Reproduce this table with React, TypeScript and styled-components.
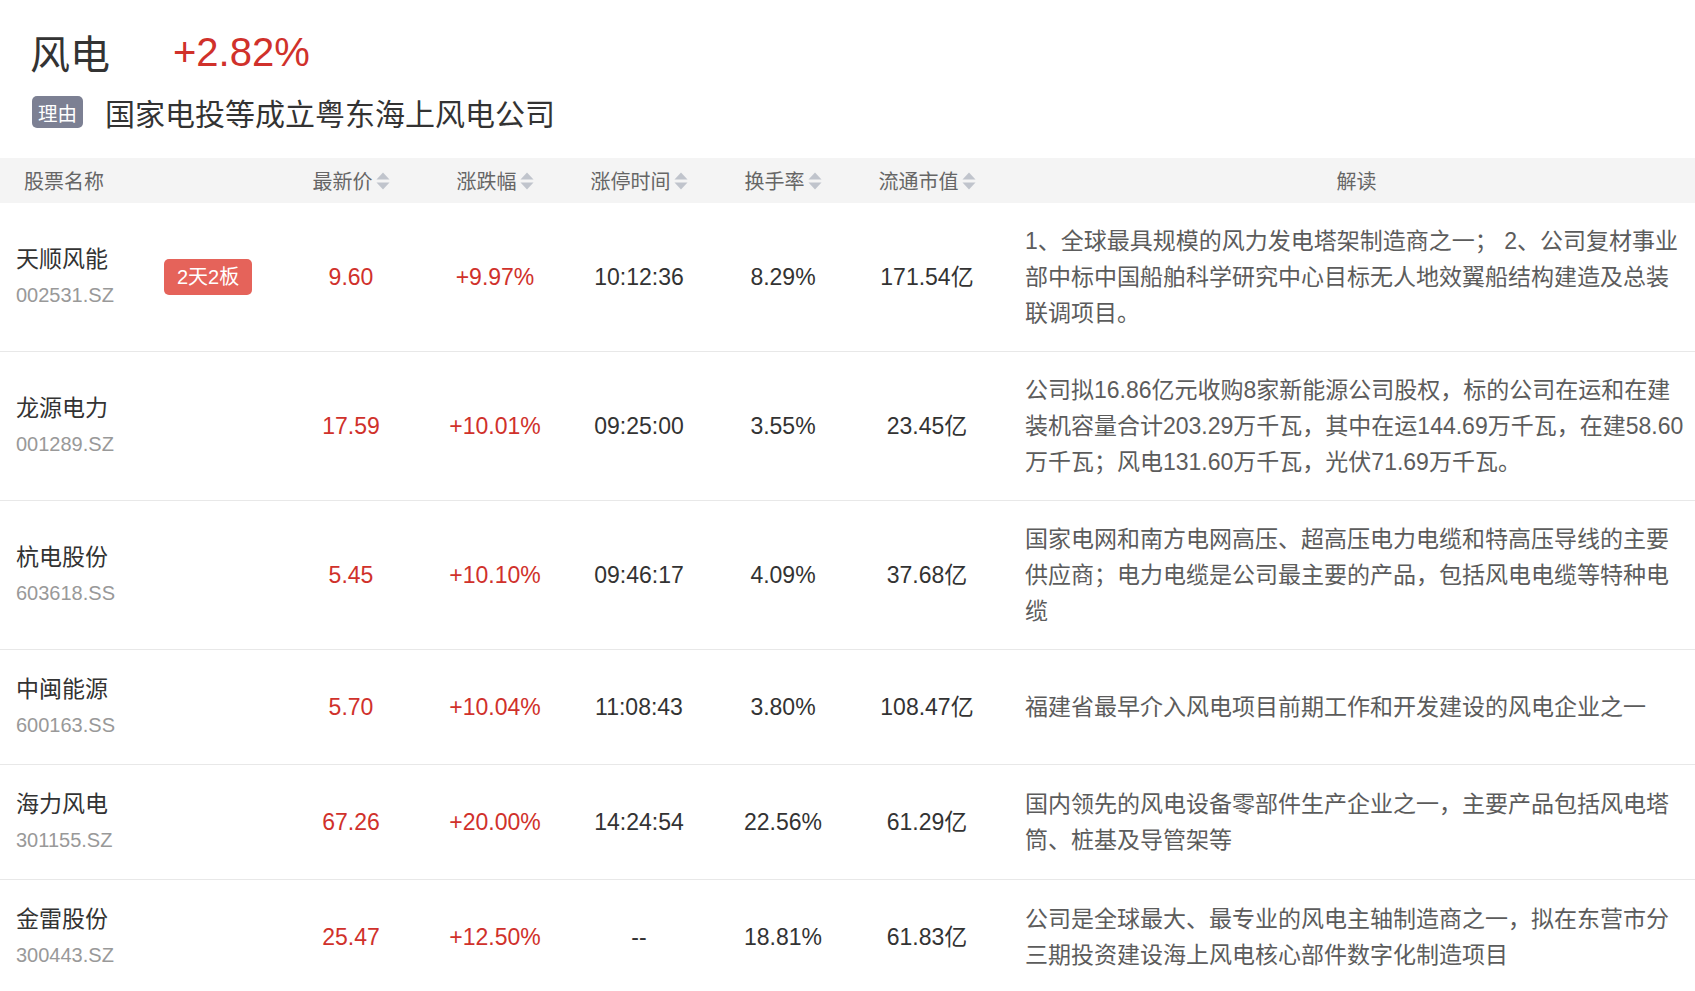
import * as React from 'react'
import styled, { createGlobalStyle } from 'styled-components'

const red = '#d0312b'

const GlobalStyle = createGlobalStyle`
  body {
    margin: 0;
    background: #fff;
    font-family: "Liberation Sans", "Noto Sans CJK SC", sans-serif;
    color: #333;
  }
`

const Page = styled.div`
  width: 1695px;
`

const Top = styled.section`
  padding: 24px 0 26px 30px;
`

const TitleRow = styled.div`
  display: flex;
  align-items: center;
  gap: 63px;
  height: 56px;
  font-size: 40px;
`

const Title = styled.h1`
  margin: 0;
  font-size: 40px;
  font-weight: 400;
  color: #333;
`

const Change = styled.span`
  color: ${red};
`

const ReasonRow = styled.div`
  display: flex;
  align-items: center;
  gap: 22px;
  height: 40px;
  margin-top: 12px;
  padding-left: 2px;
`

const Tag = styled.span`
  display: inline-flex;
  align-items: center;
  height: 32px;
  padding: 0 6px;
  border-radius: 5px;
  background: #7c8093;
  color: #fff;
  font-size: 19.5px;
`

const Reason = styled.span`
  font-size: 30px;
  color: #333;
`

const columns = '164px 115px repeat(5, 144px) 1fr'

const HeadRow = styled.div`
  display: grid;
  grid-template-columns: ${columns};
  align-items: center;
  height: 45px;
  background: #f4f4f4;
  font-size: 20px;
  color: #666;
`

const HeadCell = styled.div<{ $span?: number; $left?: boolean }>`
  grid-column: span ${({ $span }) => $span || 1};
  display: flex;
  align-items: center;
  justify-content: ${({ $left }) => ($left ? 'flex-start' : 'center')};
  padding-left: ${({ $left }) => ($left ? '24px' : '0')};
`

const DescHead = styled.div`
  text-align: center;
  padding: 0 7px 0 26px;
`

const SortIcon = () => (
  <svg width="14" height="18" viewBox="0 0 14 18" style={{ marginLeft: 3 }}>
    <polygon points="7,0.5 13.5,7.5 0.5,7.5" fill="#c0c4cc" />
    <polygon points="0.5,10.5 13.5,10.5 7,17.5" fill="#c0c4cc" />
  </svg>
)

const Row = styled.div`
  display: grid;
  grid-template-columns: ${columns};
  align-items: center;
  border-bottom: 1px solid #e8e8e8;
  font-size: 23px;
  line-height: 36px;
`

const NameCell = styled.div`
  display: flex;
  flex-direction: column;
  padding: 21px 0 21px 16px;
`

const Name = styled.span`
  color: #333;
  font-size: 23px;
`

const Code = styled.span`
  color: #999;
  font-size: 20px;
`

const BadgeCell = styled.div`
  display: flex;
  align-items: center;
`

const Badge = styled.span`
  display: inline-flex;
  align-items: center;
  height: 36px;
  padding: 0 13px;
  border-radius: 5px;
  background: #e5635a;
  color: #fff;
  font-size: 20px;
  line-height: 1;
`

const Num = styled.div<{ $red?: boolean }>`
  text-align: center;
  color: ${({ $red }) => ($red ? red : '#333')};
`

const Desc = styled.div`
  padding: 20px 7px 20px 26px;
  color: #5c5c5c;
`

type Stock = {
  name: string
  code: string
  badge?: string
  price: string
  change: string
  time: string
  turnover: string
  cap: string
  desc: string
}

const stocks: Stock[] = [
  {
    name: '天顺风能',
    code: '002531.SZ',
    badge: '2天2板',
    price: '9.60',
    change: '+9.97%',
    time: '10:12:36',
    turnover: '8.29%',
    cap: '171.54亿',
    desc: '1、全球最具规模的风力发电塔架制造商之一； 2、公司复材事业部中标中国船舶科学研究中心目标无人地效翼船结构建造及总装联调项目。',
  },
  {
    name: '龙源电力',
    code: '001289.SZ',
    price: '17.59',
    change: '+10.01%',
    time: '09:25:00',
    turnover: '3.55%',
    cap: '23.45亿',
    desc: '公司拟16.86亿元收购8家新能源公司股权，标的公司在运和在建装机容量合计203.29万千瓦，其中在运144.69万千瓦，在建58.60万千瓦；风电131.60万千瓦，光伏71.69万千瓦。',
  },
  {
    name: '杭电股份',
    code: '603618.SS',
    price: '5.45',
    change: '+10.10%',
    time: '09:46:17',
    turnover: '4.09%',
    cap: '37.68亿',
    desc: '国家电网和南方电网高压、超高压电力电缆和特高压导线的主要供应商；电力电缆是公司最主要的产品，包括风电电缆等特种电缆',
  },
  {
    name: '中闽能源',
    code: '600163.SS',
    price: '5.70',
    change: '+10.04%',
    time: '11:08:43',
    turnover: '3.80%',
    cap: '108.47亿',
    desc: '福建省最早介入风电项目前期工作和开发建设的风电企业之一',
  },
  {
    name: '海力风电',
    code: '301155.SZ',
    price: '67.26',
    change: '+20.00%',
    time: '14:24:54',
    turnover: '22.56%',
    cap: '61.29亿',
    desc: '国内领先的风电设备零部件生产企业之一，主要产品包括风电塔筒、桩基及导管架等',
  },
  {
    name: '金雷股份',
    code: '300443.SZ',
    price: '25.47',
    change: '+12.50%',
    time: '--',
    turnover: '18.81%',
    cap: '61.83亿',
    desc: '公司是全球最大、最专业的风电主轴制造商之一，拟在东营市分三期投资建设海上风电核心部件数字化制造项目',
  },
]

const sortable = ['最新价', '涨跌幅', '涨停时间', '换手率', '流通市值']

const StockRow = ({ stock }: { stock: Stock }) => (
  <Row>
    <NameCell>
      <Name>{stock.name}</Name>
      <Code>{stock.code}</Code>
    </NameCell>
    <BadgeCell>{stock.badge && <Badge>{stock.badge}</Badge>}</BadgeCell>
    <Num $red>{stock.price}</Num>
    <Num $red>{stock.change}</Num>
    <Num>{stock.time}</Num>
    <Num>{stock.turnover}</Num>
    <Num>{stock.cap}</Num>
    <Desc>{stock.desc}</Desc>
  </Row>
)

export default function App() {
  return (
    <Page>
      <GlobalStyle />
      <Top>
        <TitleRow>
          <Title>风电</Title>
          <Change>+2.82%</Change>
        </TitleRow>
        <ReasonRow>
          <Tag>理由</Tag>
          <Reason>国家电投等成立粤东海上风电公司</Reason>
        </ReasonRow>
      </Top>
      <HeadRow>
        <HeadCell $span={2} $left>
          股票名称
        </HeadCell>
        {sortable.map(label => (
          <HeadCell key={label}>
            {label}
            <SortIcon />
          </HeadCell>
        ))}
        <DescHead>解读</DescHead>
      </HeadRow>
      {stocks.map(s => (
        <StockRow key={s.code} stock={s} />
      ))}
    </Page>
  )
}
